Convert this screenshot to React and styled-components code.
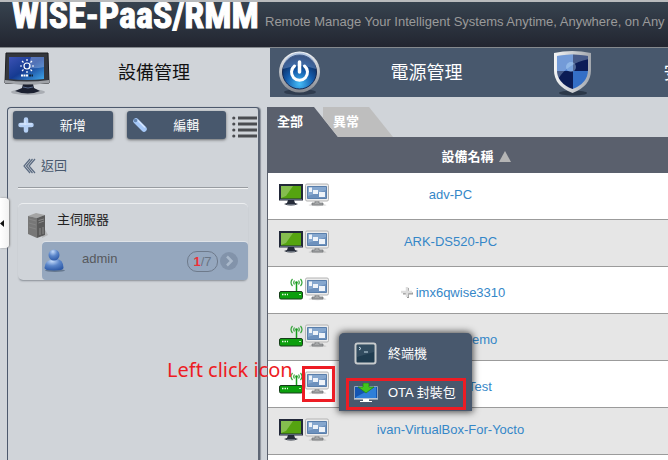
import React from "react";
import styled, { createGlobalStyle, css } from "styled-components";

const latin = '"Liberation Sans", "Noto Sans CJK TC", sans-serif';

const GlobalStyle = createGlobalStyle`
  *, *::before, *::after { box-sizing: border-box; }
  html, body, #root { height: 100%; }
  body { margin: 0; overflow: hidden; background: #d0d4d9; font: 13px/20px ${latin}; }
  button { font: inherit; border: 0; padding: 0; margin: 0; background: none; color: inherit; cursor: pointer; }
  a { color: inherit; text-decoration: none; }
  svg { display: block; flex: none; }
`;

const Page = styled.div`
  position: relative;
  display: flex;
  flex-direction: column;
  height: 100%;
  overflow: hidden;
`;

const Header = styled.header`
  display: flex;
  align-items: flex-start;
  gap: 6px;
  height: 48px;
  flex: none;
  padding-left: 12px;
  overflow: hidden;
  white-space: nowrap;
  border-top: 2px solid #b9bbbd;
  border-bottom: 1px solid #85898e;
  background: linear-gradient(#37434f, #222530);
`;

const Logo = styled.h1`
  flex: none;
  width: 247px;
  margin: 0;
  font: 700 36px/28px "Roboto Condensed", "Liberation Sans Narrow", "Arial Narrow", "Open Sans Condensed", "Liberation Sans", sans-serif;
  color: #fff;
  -webkit-text-stroke: 1px #fff;
`;

const Tagline = styled.p`
  margin: 10px 0 0;
  font-size: 13px;
  line-height: 20px;
  color: #9a9a9a;
`;

const Nav = styled.nav`
  display: flex;
  flex: none;
  height: 49px;
  overflow: hidden;
  background: #48586d;
`;

const NavItem = styled.button`
  display: flex;
  align-items: center;
  flex: none;
  width: ${(p) => (p.$active ? 270 : 273)}px;
  padding-left: ${(p) => (p.$active ? 4 : 8)}px;
  font-size: 18px;
  color: #fff;
  ${(p) => p.$active && css`
    background: #d0d4d9;
    color: #111;
  `}
`;

const NavLabel = styled.span`
  flex: 1;
  padding-right: 12px;
  text-align: center;
  white-space: nowrap;
`;

const Body = styled.div`
  display: flex;
  flex: 1;
  gap: 7px;
  min-height: 0;
  padding: 10px 0 0 7px;
`;

const Sidebar = styled.aside`
  width: 253px;
  flex: none;
  padding: 3px 1px 0 5px;
  border: 1px solid #4d596d;
  border-right: 2px solid #5d6675;
  border-bottom: 0;
  border-radius: 4px 4px 0 0;
  box-shadow: 1px 0 1px #8c929b;
`;

const Toolbar = styled.div`
  display: flex;
  align-items: center;
`;

const ToolButton = styled.button`
  display: flex;
  align-items: center;
  width: 100px;
  height: 28px;
  margin-right: ${(p) => (p.$last ? 6 : 14)}px;
  padding-left: 4px;
  border-radius: 3px;
  background: #48586d;
  color: #fff;
  box-shadow: 0 1px 3px rgba(0, 0, 0, 0.5);
  span { flex: 1; padding: 2px 2px 0 0; text-align: center; }
`;

const ListButton = styled.button`
  padding-top: 3px;
`;

const BackLink = styled.a`
  display: flex;
  align-items: center;
  gap: 5px;
  margin: 17px 0 11px 10px;
  color: #48586d;
`;

const Rule = styled.hr`
  height: 2px;
  margin: 0 9px 14px 5px;
  border: 0;
  border-top: 1px solid #989ca1;
  border-bottom: 1px solid #f2f3f4;
`;

const ServerGroup = styled.section`
  margin: 0 9px 0 5px;
  padding: 3px 0 0 24px;
  border-top: 1px solid #eceef0;
  border-radius: 5px;
  box-shadow: 0 2px 2px -1px #888e96;
`;

const ServerTitle = styled.h2`
  display: flex;
  align-items: flex-start;
  gap: 8px;
  height: 35px;
  margin: 0 0 0 -14px;
  padding-top: 3px;
  font-size: 13px;
  font-weight: 400;
  color: #222;
  svg { margin-top: 3px; }
`;

const Account = styled.button`
  display: flex;
  align-items: center;
  width: 100%;
  height: 38px;
  padding: 0 10px 0 2px;
  border-radius: 4px;
  background: #95a7be;
  color: #57595d;
  box-shadow: 0 -1px 0 #dfe3e8;
`;

const AccountName = styled.span`
  flex: 1;
  padding: 0 0 5px 17px;
  text-align: left;
`;

const Count = styled.span`
  width: 31px;
  height: 21px;
  margin-right: 2px;
  border: 1px solid #6e7a8b;
  border-radius: 10px;
  line-height: 19px;
  text-align: center;
  color: #6a7584;
  b { color: #ee3038; }
`;

const Devices = styled.main`
  display: flex;
  flex: 1;
  flex-direction: column;
  min-width: 0;
`;

const Tabs = styled.div`
  display: flex;
  flex: none;
  height: 30px;
`;

const Tab = styled.button`
  flex: none;
  width: ${(p) => (p.$active ? 71 : 70)}px;
  margin-left: ${(p) => (p.$active ? 0 : -15)}px;
  padding: 0 0 0 10px;
  text-align: left;
  font-weight: 700;
  color: #fff;
  background: ${(p) => (p.$active ? "#5a606d" : "#bebebe")};
  clip-path: ${(p) => (p.$active
    ? "polygon(0 0, 47px 0, 100% 100%, 0 100%)"
    : "polygon(0 0, 46px 0, 100% 100%, 15px 100%, 0 11px)")};
`;

const TableArea = styled.div`
  flex: 1;
  border-left: 1px solid #5a606d;
  background: #fff;
`;

const Table = styled.table`
  width: 100%;
  border-collapse: separate;
  border-spacing: 0;
  table-layout: fixed;
`;

const HeadCell = styled.th`
  width: ${(p) => p.$width};
  height: 36px;
  padding: 0;
  background: #5a606d;
  color: #fff;
`;

const SortButton = styled.button`
  display: flex;
  align-items: center;
  justify-content: center;
  gap: 5px;
  width: 100%;
  padding: 3px 0 0 52px;
  font-weight: 700;
`;

const Row = styled.tr`
  background: ${(p) => (p.$shade ? "#e6e6e6" : "#fff")};
`;

const Cell = styled.td`
  height: 47px;
  padding: 0;
  border-bottom: 1px solid #9b9b9b;
  text-align: center;
`;

const IconPair = styled.div`
  display: flex;
  gap: 2px;
  padding: 0 0 2px 11px;
`;

const NameBox = styled.div`
  display: flex;
  align-items: center;
  justify-content: center;
  gap: 3px;
  padding: ${(p) => (p.$added ? "5px 0 0 6px" : "0 0 3px 1px")};
  white-space: nowrap;
  color: #3587c8;
`;

const Collapse = styled.button`
  position: absolute;
  left: 0;
  top: 198px;
  width: 9px;
  height: 50px;
  border-radius: 0 4px 4px 0;
  background: linear-gradient(90deg, #fff, #f1f1f1);
  box-shadow: 1px 0 2px #888;
`;

const Menu = styled.div`
  position: absolute;
  left: 339px;
  top: 333px;
  width: 133px;
  padding: 1px 6px 1px 7px;
  border-radius: 5px 5px 0 0;
  background: #48586d;
  box-shadow: 0 0 7px 1px rgba(0, 0, 0, 0.7);
`;

const MenuItem = styled.button`
  display: flex;
  align-items: center;
  gap: 10px;
  width: 100%;
  height: ${(p) => (p.$marked ? 32 : 40)}px;
  margin-top: ${(p) => (p.$marked ? 4 : 0)}px;
  padding: 0 0 ${(p) => (p.$marked ? "2px 5px" : "0 8px")};
  border: ${(p) => (p.$marked ? "3px solid #ed1c24" : "0")};
  color: #fff;
  white-space: nowrap;
`;

const Highlight = styled.div`
  position: absolute;
  left: 302px;
  top: 366px;
  width: 33px;
  height: 36px;
  border: 3px solid #ed1c24;
`;

const Note = styled.p`
  position: absolute;
  left: 167px;
  top: 358px;
  margin: 0;
  font: 20px/24px "Noto Sans", sans-serif;
  color: #ed1c24;
  white-space: nowrap;
`;

function DisplayIcon() {
  return (
    <svg width="46" height="46" viewBox="0 0 46 46" aria-hidden="true">
      <defs>
        <linearGradient id="screen" x1="0" y1="0" x2="1" y2="1">
          <stop offset="0" stopColor="#3c52b4" /><stop offset=".5" stopColor="#153a91" /><stop offset="1" stopColor="#40a9ea" />
        </linearGradient>
      </defs>
      <ellipse cx="24" cy="42" rx="17" ry="3" fill="#8f9399" opacity=".6" />
      <path d="M19 34h10l1 4 6 3q-12 5-25 0l7-3z" fill="#1b2030" />
      <path d="M19 37q5 2 10 0" stroke="#5a6c8d" fill="none" />
      <path d="M2 3h42l1 30q-22 2-44 0z" fill="#34373d" stroke="#1b1c20" />
      <path d="M1 30q22 3 44 0v3q-22 3-44 0z" fill="#a0a3a8" />
      <path d="M5 7h35v22q-17 2-35 0z" fill="url(#screen)" />
      <path d="M27 7h13v10q-8 2-16 1z" fill="#9eb8e4" opacity=".45" />
      <g stroke="#fff" strokeWidth="1.2" fill="none">
        <circle cx="23" cy="16" r="3" />
        <path d="M23 9v2m0 10v2m-7-7h2m10 0h2m-12-5 1.500 1.500m7 7 1.500 1.500m0-10-1.500 1.500m-7 7-1.500 1.500" />
      </g>
      <path d="M17 25.500h7" stroke="#fff" strokeWidth="2" strokeDasharray="2 .5" />
      <path d="M25 25.500h4" stroke="#123" strokeWidth="2" strokeDasharray="2 .5" />
    </svg>
  );
}

function PowerIcon() {
  return (
    <svg width="44" height="46" viewBox="0 0 44 46" aria-hidden="true">
      <defs>
        <linearGradient id="ring" x1="0" y1="0" x2="0" y2="1"><stop stopColor="#f3f4f6" /><stop offset="1" stopColor="#83878f" /></linearGradient>
        <radialGradient id="orb" cx=".5" cy=".85" r=".8"><stop stopColor="#45bdf8" /><stop offset=".5" stopColor="#145bab" /><stop offset="1" stopColor="#091c47" /></radialGradient>
      </defs>
      <ellipse cx="22" cy="42" rx="16" ry="3" fill="#253043" opacity=".7" />
      <circle cx="21.500" cy="22" r="20.500" fill="url(#ring)" />
      <circle cx="21.500" cy="22" r="17" fill="url(#orb)" stroke="#152a55" />
      <path d="M5 19a16.500 16.500 0 0 1 33 0q-16-6-33 0z" fill="#7ba0d4" opacity=".45" />
      <path d="M16.500 16a8 8 0 1 0 10 0" fill="none" stroke="#fff" strokeWidth="3" strokeLinecap="round" />
      <path d="M21.500 12v10" stroke="#fff" strokeWidth="3.500" strokeLinecap="round" />
    </svg>
  );
}

function ShieldIcon() {
  return (
    <svg width="44" height="46" viewBox="0 0 44 46" aria-hidden="true">
      <defs>
        <clipPath id="shieldFace"><path d="M6 6q15-3 31 0v14q0 13-15.500 19Q6 33 6 20z" /></clipPath>
        <linearGradient id="steel"><stop stopColor="#f4f5f6" /><stop offset="1" stopColor="#a2a7ae" /></linearGradient>
      </defs>
      <ellipse cx="22" cy="43" rx="14" ry="2.500" fill="#222d3e" opacity=".75" />
      <path d="M3 3q18-4 37 0v17q0 16-18.500 23Q3 36 3 20z" fill="url(#steel)" />
      <g clipPath="url(#shieldFace)">
        <path d="M5 3h17v18H5z" fill="#4a78c8" /><path d="M22 3h16v18H22z" fill="#0b1c57" />
        <path d="M5 21h17v20H5z" fill="#0b1c55" /><path d="M22 21h16v20H22z" fill="#346fc6" />
        <path d="M5 2h33v7Q17 13 7 29H5z" fill="#d5edff" opacity=".3" />
        <circle cx="20" cy="17" r="5" fill="#bfe3ff" opacity=".4" />
      </g>
    </svg>
  );
}

function PlusIcon() {
  return <svg width="18" height="18" viewBox="0 0 18 18" aria-hidden="true"><path d="M9 3.500v11M3.500 9h11" stroke="#b6d1f6" strokeWidth="4.500" strokeLinecap="round" /><path d="M3 8h12M8 4v5" stroke="#ddebff" /></svg>;
}

function PencilIcon() {
  return <svg width="18" height="18" viewBox="0 0 18 18" aria-hidden="true"><path d="m5 5 8 8" stroke="#a6c8f7" strokeWidth="5.500" strokeLinecap="round" /><path d="m6.500 4 7.500 7.500" stroke="#d6e6ff" strokeWidth="1.500" /><circle cx="4.500" cy="4.500" r="1.800" fill="#6687b3" /></svg>;
}

function ListIcon() {
  return <svg width="25" height="22" viewBox="0 0 25 22" aria-hidden="true"><path d="M6 2h19M6 8h19M6 14h19M6 20h19" stroke="#4a4c50" strokeWidth="3" />{[2, 8, 14, 20].map((y) => <circle key={y} cx="1.800" cy={y} r="1.600" fill="#4a4c50" />)}</svg>;
}

function BackIcon() {
  return <svg width="13" height="16" viewBox="0 0 13 16" aria-hidden="true"><path d="M7 1 1 8l6 7M12 1 6 8l6 7M9.500 1 3.500 8l6 7" fill="none" stroke="#5a6a80" strokeWidth="1.200" /></svg>;
}

function ServerIcon() {
  return (
    <svg width="21" height="26" viewBox="0 0 21 26" aria-hidden="true">
      <path d="m15 13 5 9-6 3z" fill="#999" opacity=".5" />
      <path d="m0 3 8-3 9 2-8 3z" fill="#a5a5a5" /><path d="m0 3 9 2v20l-9-4z" fill="#777" /><path d="m9 5 8-3v20l-8 3z" fill="#5a5a5a" />
      <path d="M10.500 7.500 16 6M10.500 10l5.500-2M12 15v7m3-8v7" stroke="#8a8a8a" />
      <path d="m1 6 7 2m-7 2 7 2m-7 2 7 2" stroke="#868686" />
    </svg>
  );
}

function UserIcon() {
  return (
    <svg width="21" height="24" viewBox="0 0 21 24" aria-hidden="true">
      <defs><radialGradient id="user" cx=".4" cy=".2" r=".8"><stop stopColor="#c3dafa" /><stop offset=".5" stopColor="#5b86ca" /><stop offset="1" stopColor="#2f5ba8" /></radialGradient></defs>
      <ellipse cx="11" cy="21.500" rx="10" ry="1.500" fill="#66788f" />
      <path d="M.500 19q0-8 9.500-9t9.500 9q0 2.500-9.500 2.500T.500 19z" fill="url(#user)" /><circle cx="10" cy="6" r="5.500" fill="url(#user)" />
    </svg>
  );
}

function ArrowIcon() {
  return <svg width="18" height="18" viewBox="0 0 18 18" aria-hidden="true"><circle cx="9" cy="9" r="9" fill="#8293aa" /><path d="m7 4.500 4.500 4.500L7 13.500" fill="none" stroke="#aab9cb" strokeWidth="2.500" /></svg>;
}

function ComputerIcon() {
  return (
    <svg width="24" height="24" viewBox="0 0 24 24" aria-hidden="true">
      <path d="M9 17h6l1 3 3 1q-7 3-14 0l3-1z" fill="#252b38" /><path d="M0 1h24v16.500H0z" fill="#222839" />
      <path d="M2 3h20v12.500H2z" fill="#55a410" /><path d="M2 3h12L7 13l-5 2z" fill="#9ac76b" opacity=".7" /><path d="M1 16.500h22" stroke="#59647a" />
      <path d="M8 21.500h8" stroke="#656d79" />
    </svg>
  );
}

function RouterIcon() {
  return (
    <svg width="24" height="24" viewBox="0 0 24 24" aria-hidden="true">
      <rect x=".5" y="14.500" width="23" height="7.500" rx="1.500" fill="#0c9f0e" stroke="#173d1b" />
      <path d="M3 17.500h6" stroke="#e1f8de" strokeWidth="1.500" strokeDasharray="1.500 1" /><path d="M20 17.500h2" stroke="#b8edb3" />
      <path d="M17.500 6v8" stroke="#159c1b" strokeWidth="1.500" />
      <path d="M15.500 7.500q-1.500-2 0-4m4 0q1.500 2 0 4M13.500 9q-3-3.500 0-7m8 0q3 3.500 0 7" fill="none" stroke="#35a33a" strokeWidth="1.200" /><circle cx="17.500" cy="5.500" r="1.300" fill="#159c1b" />
    </svg>
  );
}

function RemoteIcon() {
  return (
    <svg width="24" height="24" viewBox="0 0 24 24" aria-hidden="true">
      <ellipse cx="12.500" cy="22" rx="9" ry="1.200" fill="#888" opacity=".3" /><path d="M10 18h4v2h4v2H7v-2h3z" fill="#a5a7a8" stroke="#6a6d70" strokeWidth=".7" />
      <rect x=".5" y="1" width="23" height="17" rx="1.500" fill="#ededed" stroke="#b4b4b4" />
      <path d="M2.500 3.500h19v12h-19z" fill="#6d91bd" stroke="#5a7fab" /><path d="M3 4h18v3L3 13z" fill="#97b5d8" opacity=".6" />
      <path d="M4 4.500h3V9H4zm4 2.500h5v4H8zm6 2h6v5h-6z" fill="#eef3f9" />
    </svg>
  );
}

function TerminalIcon() {
  return <svg width="24" height="24" viewBox="0 0 24 24" aria-hidden="true"><rect x="1.500" y="1.500" width="20" height="20" rx="2" fill="#203c50" stroke="#c8cbcd" strokeWidth="2" /><path d="M3 3h17v7L3 15z" fill="#4d6577" opacity=".4" /><path d="m5 5 2 1.500L5 8m5 2h4" fill="none" stroke="#c8dce8" /></svg>;
}

function PackageIcon() {
  return <svg width="24" height="20" viewBox="0 0 24 20" aria-hidden="true"><path d="M.500 3.500h23v12H.500z" fill="#1455b2" stroke="#8fa3bb" /><path d="m2 14 19-10h1v11H2z" fill="#2f7fd8" /><path d="M9 0h6v4h5l-8 6-8-6h5z" fill="#42c51c" stroke="#237d18" strokeWidth=".7" /><path d="M0 16h24" stroke="#e3e8ee" /><path d="M9 16h6v2h3v1H6v-1h3z" fill="#fff" /></svg>;
}

function AddMark() {
  return <svg width="12" height="14" viewBox="0 0 12 14" aria-hidden="true"><path d="M7 2v10M2 7.500h10" stroke="#999" strokeWidth="2" /><path d="M6 1v10M0 6h11" stroke="#ddd" strokeWidth="2.500" /></svg>;
}

const devices = [
  { name: "adv-PC", kind: "pc" },
  { name: "ARK-DS520-PC", kind: "pc" },
  { name: "imx6qwise3310", kind: "router", added: true },
  { name: "imx6q-Demo", kind: "router", added: true },
  { name: "imx6q-Test", kind: "router", added: true },
  { name: "ivan-VirtualBox-For-Yocto", kind: "pc" },
];

export default function App() {
  return (
    <Page>
      <GlobalStyle />
      <Header>
        <Logo>WISE-PaaS/RMM</Logo>
        <Tagline>Remote Manage Your Intelligent Systems Anytime, Anywhere, on Any Device</Tagline>
      </Header>
      <Nav>
        <NavItem $active><DisplayIcon /><NavLabel>設備管理</NavLabel></NavItem>
        <NavItem><PowerIcon /><NavLabel>電源管理</NavLabel></NavItem>
        <NavItem><ShieldIcon /><NavLabel>安全防護</NavLabel></NavItem>
      </Nav>
      <Body>
        <Sidebar>
          <Toolbar>
            <ToolButton><PlusIcon /><span>新增</span></ToolButton>
            <ToolButton $last><PencilIcon /><span>編輯</span></ToolButton>
            <ListButton aria-label="清單"><ListIcon /></ListButton>
          </Toolbar>
          <BackLink href="#back"><BackIcon />返回</BackLink>
          <Rule />
          <ServerGroup>
            <ServerTitle><ServerIcon />主伺服器</ServerTitle>
            <Account>
              <UserIcon />
              <AccountName>admin</AccountName>
              <Count><b>1</b>/7</Count>
              <ArrowIcon />
            </Account>
          </ServerGroup>
        </Sidebar>
        <Devices>
          <Tabs>
            <Tab $active>全部</Tab>
            <Tab>異常</Tab>
          </Tabs>
          <TableArea>
            <Table>
              <thead>
                <tr>
                  <HeadCell $width="76px" aria-label="圖示" />
                  <HeadCell $width="212px">
                    <SortButton>設備名稱<svg width="12" height="11" viewBox="0 0 12 11" aria-hidden="true"><path d="m6 0 6 11H0z" fill="#b5b5b5" /></svg></SortButton>
                  </HeadCell>
                  <HeadCell aria-label="狀態" />
                </tr>
              </thead>
              <tbody>
                {devices.map((d, i) => (
                  <Row key={d.name} $shade={i % 2 === 1}>
                    <Cell><IconPair>{d.kind === "pc" ? <ComputerIcon /> : <RouterIcon />}<RemoteIcon /></IconPair></Cell>
                    <Cell><NameBox $added={d.added}>{d.added && <AddMark />}<a href="#device">{d.name}</a></NameBox></Cell>
                    <Cell />
                  </Row>
                ))}
              </tbody>
            </Table>
          </TableArea>
        </Devices>
      </Body>
      <Collapse aria-label="收合"><svg width="4" height="7" viewBox="0 0 4 7" aria-hidden="true"><path d="M4 0v7L0 3.500z" fill="#111" /></svg></Collapse>
      <Menu>
        <MenuItem><TerminalIcon />終端機</MenuItem>
        <MenuItem $marked><PackageIcon />OTA 封裝包</MenuItem>
      </Menu>
      <Highlight />
      <Note>Left click icon</Note>
    </Page>
  );
}
